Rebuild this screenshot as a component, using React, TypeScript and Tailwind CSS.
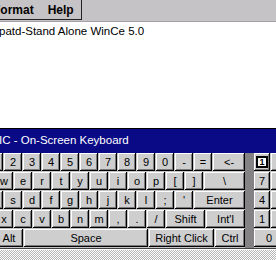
import type { ReactNode } from 'react';

const keyFace =
  'h-[18px] shrink-0 flex items-center justify-center bg-[#cecece] text-[11px] leading-none text-black shadow-[inset_-1px_-1px_0_#000,inset_1px_1px_0_#fff,inset_-2px_-2px_0_#7b7b7b]';

function Key({ label, w = 'w-[18px]' }: { label?: ReactNode; w?: string }) {
  return <div className={`${keyFace} ${w}`}>{label}</div>;
}

const row1 = ['1', '2', '3', '4', '5', '6', '7', '8', '9', '0', '-', '='];
const row2 = ['w', 'e', 'r', 't', 'y', 'u', 'i', 'o', 'p', '[', ']'];
const row3 = ['a', 's', 'd', 'f', 'g', 'h', 'j', 'k', 'l', ';', "'"];
const row4 = ['x', 'c', 'v', 'b', 'n', 'm', ',', '.', '/'];

export default function App() {
  return (
    <div className="w-[276px] h-[260px] overflow-hidden flex flex-col bg-white font-['Liberation_Sans',Arial,sans-serif]">
      {/* menu bar */}
      <div className="h-[22px] shrink-0 flex bg-[#c6c3c6] border-b border-[#a5a2a5]">
        <div className="h-[20px] w-[82px] flex items-center gap-[14px] border-r border-b border-[#222] text-[12px] font-bold text-black">
          <span className="-ml-[7px]">Format</span>
          <span>Help</span>
        </div>
      </div>

      {/* document */}
      <div className="h-[106px] shrink-0 pt-[2px] text-[11.5px] leading-[14px] text-black">
        <div className="-ml-[1px]">patd-Stand Alone WinCe 5.0</div>
      </div>

      {/* keyboard window */}
      <div className="shrink-0 border-t border-black">
        <div className="h-[24px] flex items-center bg-[#0a0a86] text-white text-[11.5px]">
          <span className="-ml-[1px] whitespace-nowrap">IC - On-Screen Keyboard</span>
        </div>

        <div className="flex bg-[#c6c3c6]">
          <div className="w-[245px] shrink-0 overflow-hidden flex flex-col gap-px">
            <div className="flex gap-px -ml-[15px]">
              {row1.map((k) => (
                <Key key={k} label={k} />
              ))}
              <Key label="<-" w="w-[32px]" />
            </div>
            <div className="flex gap-px -ml-[5px]">
              {row2.map((k) => (
                <Key key={k} label={k} />
              ))}
              <Key label="\" w="w-[41px]" />
            </div>
            <div className="flex gap-px -ml-[15px]">
              {row3.map((k) => (
                <Key key={k} label={k} />
              ))}
              <Key label="Enter" w="w-[51px]" />
            </div>
            <div className="flex gap-px -ml-[5px]">
              {row4.map((k) => (
                <Key key={k} label={k} />
              ))}
              <Key label="Shift" w="w-[39px]" />
              <Key label="Int'l" w="w-[39px]" />
            </div>
            <div className="flex gap-px -ml-[9px] pb-px">
              <Key label={<span className="pl-[4px]">Alt</span>} w="w-[32px]" />
              <Key label="Space" w="w-[124px]" />
              <Key label="Right Click" w="w-[65px]" />
              <Key label="Ctrl" w="w-[30px]" />
            </div>
          </div>

          <div className="w-[9px] shrink-0 bg-[#848284]" />

          <div className="flex flex-col gap-px">
            <div className="flex gap-px">
              <div className={`${keyFace} w-[16px]`}>
                <div className="w-[12px] h-[12px] flex items-center justify-center border-2 border-black bg-white text-[9px] font-bold">
                  1
                </div>
              </div>
              <Key w="w-[16px]" />
            </div>
            <div className="flex gap-px">
              <Key label="7" w="w-[16px]" />
              <Key w="w-[16px]" />
            </div>
            <div className="flex gap-px">
              <Key label="4" w="w-[16px]" />
              <Key w="w-[16px]" />
            </div>
            <div className="flex gap-px">
              <Key label="1" w="w-[16px]" />
              <Key w="w-[16px]" />
            </div>
            <div className="flex gap-px">
              <Key label="0" w="w-[30px]" />
            </div>
          </div>
        </div>

        <div className="h-px bg-[#404040]" />
        <div className="h-px bg-white" />
        <div className="h-[10px] bg-[repeating-conic-gradient(#b5b5b5_0_25%,#ffffff_0_50%)] bg-[length:2px_2px]" />
      </div>
    </div>
  );
}
